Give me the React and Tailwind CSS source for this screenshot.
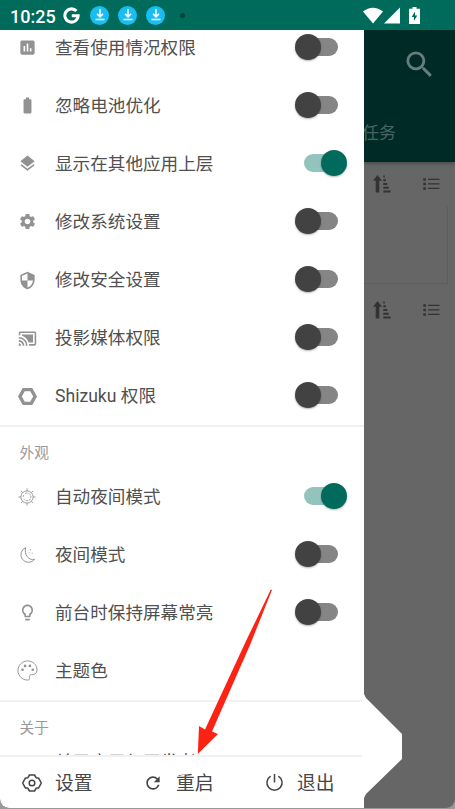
import {
  MdAssessment,
  MdBatteryFull,
  MdCastConnected,
  MdLayers,
  MdLightbulbOutline,
  MdRefresh,
  MdSearch,
  MdSecurity,
  MdSettings,
} from 'react-icons/md'

function HexIcon({ className }) {
  return (
    <svg viewBox="0 0 20 20" className={className} fill="none" stroke="currentColor" strokeWidth="3.6">
      <path d="M6 2.8h8L18 10l-4 7.2H6L2 10z" />
    </svg>
  )
}

function SunIcon({ className }) {
  return (
    <svg viewBox="0 0 20 20" className={className} fill="none" stroke="currentColor" strokeWidth="1">
      <circle cx="10" cy="10" r="6.8" />
      <path d="M8 6.1a4.300 4.300 0 1 1-1.600 6M5.800 9.800a4.300 4.300 0 0 1 .8-2.200" strokeDasharray="2.6 1" />
      <path d="M10 .5v2.7M10 16.800v2.700M.5 10h2.700M16.800 10h2.700M3.3 3.3l1.900 1.900M14.800 14.800l1.900 1.900M16.700 3.300l-1.900 1.900M5.200 14.800l-1.900 1.900" />
    </svg>
  )
}

function MoonIcon({ className }) {
  return (
    <svg viewBox="0 0 20 20" className={className} fill="none" stroke="currentColor" strokeWidth="1.1">
      <path d="M8.500 1.800A8.500 8.500 0 1 0 18.500 14.800C12 16.500 6.500 9.500 8.500 1.800z" />
      <path d="M13.200 4.300h1.200M15.200 8h1M12 7.200h.7" />
    </svg>
  )
}

function PaletteIcon({ className }) {
  return (
    <svg viewBox="0 0 22 22" className={className} fill="none" stroke="currentColor" strokeWidth="1">
      <path d="M11 1C5.500 1 1 5.500 1 11s4.500 10 10 10c2.800 0 2.200-1.300 2-2.700-.2-1.700.3-2.900 2.200-2.900 3.500 0 5.800-1.400 5.800-5C21 5 16.500 1 11 1z" />
      <g fill="currentColor" stroke="none">
        <circle cx="5.800" cy="10.200" r="1.400" />
        <circle cx="8.500" cy="6.200" r="1.400" />
        <circle cx="13.500" cy="6.200" r="1.400" />
        <circle cx="16.500" cy="10.200" r="1.400" />
      </g>
    </svg>
  )
}

function GearOutlineIcon({ className }) {
  return (
    <svg viewBox="0 0 20 20" className={className} fill="none" stroke="currentColor" strokeWidth="1.500" strokeLinejoin="round">
      <path d="M7.500 2h5L14 4.500q.3.400.8.400h1.700l2.400 4.200q.4.900 0 1.800l-2.400 4.200h-1.700q-.5 0-.8.400L12.500 18h-5L6 15.500q-.3-.4-.8-.4H3.500L1.100 10.900q-.4-.9 0-1.800l2.400-4.200h1.700q.5 0 .8-.4z" />
      <circle cx="10" cy="10" r="2.800" />
    </svg>
  )
}

function PowerIcon({ className }) {
  return (
    <svg viewBox="0 0 20 20" className={className} fill="none" stroke="currentColor" strokeWidth="1.600">
      <path d="M10 1v9M6 3.200a8 8 0 1 0 8 0" />
    </svg>
  )
}

function SortIcon() {
  return (
    <svg viewBox="0 0 18 20" className="h-5 w-[18px]" fill="currentColor">
      <path d="M4.500 1L9 6.700H6.300V18.500H2.700V6.700H0zM10.300 1.500h1.500v2h-1.500zM10.300 5.300h2.600v2h-2.600zM10.300 9h4v2h-4zM10.300 12.700h5.500v2h-5.500zM10.300 16.500h7.300v2h-7.300z" />
    </svg>
  )
}

function ListIcon() {
  return (
    <svg viewBox="0 0 17 14" className="h-3.5 w-[17px]" fill="currentColor">
      <path d="M.3 1.200h2.600v2.500H.3zM.3 5.700h2.600v2.500H.3zM.3 10.200h2.600v2.500H.3zM5 1.700h11.500v1.400H5zM5 6.200h11.500v1.400H5zM5 10.700h11.500v1.400H5z" />
    </svg>
  )
}

const PERMISSIONS = [
  { label: '查看使用情况权限', icon: MdAssessment, size: 'size-[19px]', on: false },
  { label: '忽略电池优化', icon: MdBatteryFull, size: 'size-[19px]', on: false },
  { label: '显示在其他应用上层', icon: MdLayers, size: 'size-[19px]', on: true },
  { label: '修改系统设置', icon: MdSettings, size: 'size-[19px]', on: false },
  { label: '修改安全设置', icon: MdSecurity, size: 'size-[19px]', on: false },
  { label: '投影媒体权限', icon: MdCastConnected, size: 'size-[19px]', on: false },
  { label: 'Shizuku 权限', icon: HexIcon, size: 'size-[19px]', on: false },
]

const APPEARANCE = [
  { label: '自动夜间模式', icon: SunIcon, size: 'size-[18px]', on: true },
  { label: '夜间模式', icon: MoonIcon, size: 'size-[18px]', on: false },
  { label: '前台时保持屏幕常亮', icon: MdLightbulbOutline, size: 'size-[19px]', on: false },
  { label: '主题色', icon: PaletteIcon, size: 'size-[21px]' },
]

function Switch({ on }) {
  return (
    <div className={`mb-0.5 flex h-[18px] w-[34px] items-center rounded-full ${on ? 'justify-end bg-[#94c3bd]' : 'bg-[#858585]'}`}>
      <div
        className={`size-[26px] shrink-0 rounded-full shadow-[0_1px_2px_rgba(0,0,0,0.3)] ${on ? '-mr-[9px] bg-[#006b5c]' : '-ml-[9px] bg-[#424242]'}`}
      />
    </div>
  )
}

function Row({ item }) {
  const Icon = item.icon
  return (
    <div className="flex h-[58.15px] shrink-0 items-center pr-[26px]">
      <div className="flex w-[54px] shrink-0 justify-center text-[#929292]">
        <Icon className={item.size} />
      </div>
      <span className="ml-px flex-1 whitespace-nowrap text-[17.6px] leading-6 text-[#505050]">{item.label}</span>
      {item.on !== undefined && <Switch on={item.on} />}
    </div>
  )
}

function SectionLabel({ children }) {
  return (
    <div className="flex h-[42px] shrink-0 items-center border-t-2 border-[#f1f1f1] pt-3 pl-[19.5px] text-[14.7px] text-[#999999]">
      {children}
    </div>
  )
}

function DownloadBadge() {
  return (
    <div className="flex size-[19px] items-center justify-center rounded-full bg-[#18bdf4]">
      <svg viewBox="0 0 12 12" className="size-3" fill="none" stroke="white" strokeWidth="1.500">
        <path d="M6 0v7.500M3 4.900l3 3 3-3M1.500 10.500h9" />
      </svg>
    </div>
  )
}

function StatusBar() {
  return (
    <div className="flex h-[30px] shrink-0 items-center bg-[#006a5b] pl-2.5 text-white">
      <span className="w-[53px] pt-[3px] font-[Roboto] text-[18px] leading-none font-medium">10:25</span>
      <svg viewBox="0 0 18 18" className="size-[17px]" fill="none" stroke="white" strokeWidth="3.200">
        <path d="M14.200 4.300A7 7 0 1 0 16 9.200H9.300" />
      </svg>
      <div className="ml-[10px] flex gap-[9px]">
        <DownloadBadge />
        <DownloadBadge />
        <DownloadBadge />
      </div>
      <div className="ml-[15px] size-[5px] rounded-full bg-[#004239]" />
      <div className="ml-auto flex items-center pr-[35px]">
        <svg viewBox="0 0 20 17" className="h-[17px] w-5" fill="white">
          <path d="M0 4.500C6-.6 14-.6 20 4.500L10 16.500z" />
        </svg>
        <svg viewBox="0 0 16 17" className="ml-px h-[17px] w-4" fill="white">
          <path d="M16 .5V16.500H0z" />
        </svg>
        <svg viewBox="0 0 11 17" className="ml-[9px] h-[17px] w-[11px]" fill="white">
          <path d="M3.500 0h4v1.700H11V17H0V1.700h3.500z" />
          <path d="M6 4.500L2.700 10h2.200v4L8.300 8.600H6z" fill="#006a5b" />
        </svg>
      </div>
    </div>
  )
}

function TaskToolbar() {
  return (
    <div className="flex h-11 items-center justify-between pr-[15px] pl-[9px] text-[#333333]">
      <SortIcon />
      <ListIcon />
    </div>
  )
}

function DimmedPage() {
  return (
    <div className="min-w-0 flex-1 overflow-hidden bg-[#666666]">
      <div className="flex h-[132px] flex-col justify-between bg-[#002a25] shadow-[0_1px_4px_rgba(0,0,0,0.35)]">
        <MdSearch className="mt-[17px] ml-[38px] size-[35px] text-[#667d79]" />
        <div className="mb-4 -ml-[2px] text-[17px] leading-[26px] text-[#476662]">任务</div>
      </div>
      <TaskToolbar />
      <div className="mr-[7px] h-[78px] border-r border-b border-[#5e5e5e]" />
      <div className="pt-1">
        <TaskToolbar />
      </div>
    </div>
  )
}

function Drawer() {
  return (
    <div className="flex w-[364px] shrink-0 flex-col overflow-hidden rounded-bl-[9px] bg-white">
      <div className="flex h-[725px] flex-col overflow-hidden">
        <div className="-mt-[11.5px] flex shrink-0 flex-col">
          {PERMISSIONS.map(item => <Row key={item.label} item={item} />)}
          <SectionLabel>外观</SectionLabel>
          {APPEARANCE.map(item => <Row key={item.label} item={item} />)}
          <SectionLabel>关于</SectionLabel>
          <div className="mt-2 pl-[55px] text-[17.6px] leading-6 text-[#505050]">关于应用与开发者</div>
        </div>
      </div>
      <div className="flex h-[53px] items-center border-t-2 border-[#f1f1f1] text-[18.8px] text-[#464646]">
        <div className="flex w-[121px] items-center pl-[22px]">
          <GearOutlineIcon className="mr-[13px] size-5" />
          <span className="pt-[3px]">设置</span>
        </div>
        <div className="flex w-[121px] items-center pl-[22px]">
          <MdRefresh className="mr-[13px] size-[20px]" />
          <span className="pt-[3px]">重启</span>
        </div>
        <div className="flex flex-1 items-center pl-[23px]">
          <PowerIcon className="mr-[13px] size-[19px]" />
          <span className="pt-[3px]">退出</span>
        </div>
      </div>
    </div>
  )
}

export default function App() {
  return (
    <div className="relative flex h-[809px] w-[455px] flex-col overflow-hidden bg-[#999999] font-['Roboto','Noto_Sans_CJK_SC',sans-serif]">
      <StatusBar />
      <div className="flex h-[778px] overflow-hidden rounded-b-[9px]">
        <Drawer />
        <DimmedPage />
      </div>
      {/* drawer bulge and pointer arrow lie over the page */}
      <svg viewBox="0 0 455 809" className="pointer-events-none absolute inset-0 h-[809px] w-[455px]">
        <path d="M362 690L366 698L402 734V759L366 794L362 802z" fill="white" className="blur-[0.6px]" />
        <path d="M270.8 589.5L272 590L250 645L212 731.500L218 734L197.800 754L199 726L205 729.500L246 641z" fill="#fc2314" />
      </svg>
    </div>
  )
}
